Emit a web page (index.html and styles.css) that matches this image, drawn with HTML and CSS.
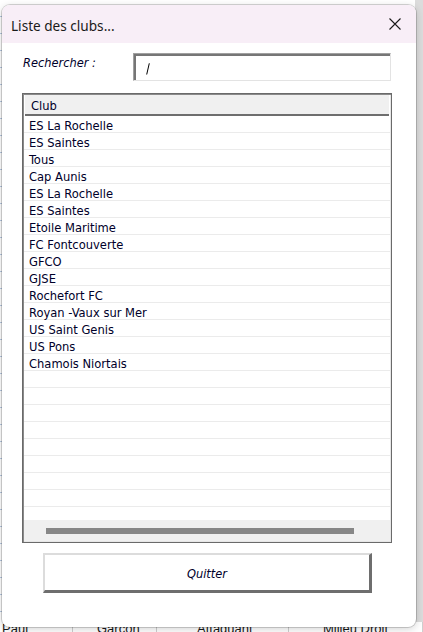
FILE: index.html
```html
<!DOCTYPE html>
<html lang="fr">
<head>
<meta charset="utf-8">
<title>Liste des clubs</title>
<link rel="stylesheet" href="styles.css">
</head>
<body>
<div class="desktop">
  <div class="sheet">
    <div class="sheet-spacer"></div>
    <div class="sheet-row">
      <span class="cell c1">Paul</span>
      <span class="cell c2">Garçon</span>
      <span class="cell c3">Attaquant</span>
      <span class="cell c4">Milieu Droit</span>
    </div>
  </div>

  <div class="dialog">
    <div class="titlebar">
      <span class="title">Liste des clubs...</span>
      <svg class="close" width="12" height="12" viewBox="0 0 12 12"><path d="M0.5 0.5 L11.5 11.5 M11.5 0.5 L0.5 11.5" stroke="#1a1a1a" stroke-width="1.1" fill="none"/></svg>
    </div>
    <div class="content">
      <div class="search-row">
        <label class="search-label">Rechercher :</label>
        <div class="textbox">
          <svg class="caret" width="4" height="12" viewBox="0 0 4 12"><path d="M3.3 0.3 L0.7 11.5" stroke="#000" stroke-width="1" fill="none"/></svg>
        </div>
      </div>

      <div class="listbox">
        <div class="list-header">Club</div>
        <div class="list-rows">
          <div class="row">ES La Rochelle</div>
          <div class="row">ES Saintes</div>
          <div class="row">Tous</div>
          <div class="row">Cap Aunis</div>
          <div class="row">ES La Rochelle</div>
          <div class="row">ES Saintes</div>
          <div class="row">Etoile Maritime</div>
          <div class="row">FC Fontcouverte</div>
          <div class="row">GFCO</div>
          <div class="row">GJSE</div>
          <div class="row">Rochefort FC</div>
          <div class="row">Royan -Vaux sur Mer</div>
          <div class="row">US Saint Genis</div>
          <div class="row">US Pons</div>
          <div class="row">Chamois Niortais</div>
          <div class="row"></div>
          <div class="row"></div>
          <div class="row"></div>
          <div class="row"></div>
          <div class="row"></div>
          <div class="row"></div>
          <div class="row"></div>
          <div class="row"></div>
          <div class="row"></div>
        </div>
        <div class="hscroll"><div class="thumb"></div></div>
      </div>

      <div class="button-row">
        <div class="button">Quitter</div>
      </div>
    </div>
  </div>
</div>
</body>
</html>
```

FILE: styles.css
```css
html, body {
  margin: 0;
  padding: 0;
}
body {
  width: 423px;
  height: 632px;
  overflow: hidden;
  font-family: "DejaVu Sans Condensed", "DejaVu Sans", sans-serif;
}
.desktop {
  position: relative;
  width: 423px;
  height: 632px;
  overflow: hidden;
  background-color: #f3f3f3;
}
.sheet {
  display: flex;
  flex-direction: column;
  width: 423px;
  height: 632px;
  background-color: #ffffff;
  background-image:
    linear-gradient(to right, transparent 415px, #dcdcdc 415px, #dcdcdc 423px),
    repeating-linear-gradient(to bottom, transparent 0, transparent 16px, #b7c9e2 16px, #b7c9e2 17px);
}
.sheet-spacer {
  flex: 1;
}
.sheet-row {
  display: flex;
  height: 10px;
  font-family: "Liberation Sans", sans-serif;
  font-size: 13px;
  line-height: 14px;
  color: #1a1a1a;
  background: #ffffff;
  overflow: hidden;
}
.cell {
  display: block;
  height: 14px;
  border-right: 1px solid #cfcfcf;
  padding-top: 0;
}
.c1 { width: 70px; padding-left: 2px; }
.c2 { padding-left: 24px; box-sizing: border-box; width: 84px; }
.c3 { width: 132px; padding-left: 40px; box-sizing: border-box; }
.c4 { flex: 1; padding-left: 34px; }

.dialog {
  position: absolute;
  left: 2px;
  top: 5px;
  width: 414px;
  height: 622px;
  background: #ffffff;
  border-radius: 8px;
  box-shadow: 0 0 0 1px rgba(0,0,0,0.16), 0 2px 8px rgba(0,0,0,0.18);
  overflow: hidden;
  display: flex;
  flex-direction: column;
}
.titlebar {
  height: 38px;
  flex: none;
  background: #f8eef7;
  display: flex;
  align-items: center;
  justify-content: space-between;
  padding: 0 15px 0 9px;
}
.title {
  font-family: "Noto Sans", "Open Sans", sans-serif;
  font-size: 13.6px;
  color: #1a1a1a;
  position: relative;
  top: 1px;
}
.close {
  display: block;
}
.content {
  display: flex;
  flex-direction: column;
  padding: 10px 0 0 20px;
}
.search-row {
  display: flex;
  align-items: flex-start;
  height: 28px;
}
.search-label {
  width: 110px;
  padding-left: 1px;
  padding-top: 2px;
  font-style: italic;
  font-size: 12.7px;
  color: #00002a;
}
.textbox {
  box-sizing: border-box;
  width: 258px;
  height: 28px;
  border-top: 1px solid #a0a0a0;
  border-left: 1px solid #a0a0a0;
  border-right: 1px solid #e3e3e3;
  border-bottom: 1px solid #e3e3e3;
  box-shadow: inset 2px 2px 0 #767676;
  display: flex;
  align-items: flex-start;
  padding: 9px 0 0 12px;
}
.caret {
  display: block;
}

.listbox {
  box-sizing: border-box;
  margin-top: 12px;
  width: 370px;
  height: 450px;
  border: 1px solid #6a6a6a;
  box-shadow: inset 1px 1px 0 #8a8a8a, inset -1px -1px 0 #e6e6e6;
  padding: 1px;
  display: flex;
  flex-direction: column;
}
.list-header {
  flex: none;
  box-sizing: border-box;
  height: 21px;
  background: #f0f0f0;
  border-bottom: 2px solid #6e6e6e;
  margin: 0 1px 0 1px;
  padding-left: 6px;
  padding-top: 3px;
  font-size: 12.8px;
  line-height: 16px;
  color: #00002a;
}
.list-rows {
  flex: 1;
  overflow: hidden;
  background: #ffffff;
}
.row {
  box-sizing: border-box;
  height: 17px;
  border-bottom: 1px solid #ebebeb;
  padding-left: 5px;
  padding-top: 2px;
  font-size: 12.8px;
  line-height: 15px;
  color: #00002a;
  white-space: nowrap;
}
.hscroll {
  flex: none;
  height: 21px;
  background: #f0f0f0;
  display: flex;
  align-items: center;
  padding-left: 22px;
  margin-bottom: 0;
}
.thumb {
  width: 308px;
  height: 6px;
  background: #878787;
}

.button-row {
  display: flex;
  padding-left: 21px;
  margin-top: 10px;
}
.button {
  box-sizing: border-box;
  width: 329px;
  height: 40px;
  border-top: 2px solid #dcdcdc;
  border-left: 2px solid #dcdcdc;
  border-right: 3px solid #6e6e6e;
  border-bottom: 3px solid #6e6e6e;
  background: #ffffff;
  display: flex;
  align-items: center;
  justify-content: center;
  padding-top: 1px;
  font-style: italic;
  font-size: 12.7px;
  color: #00002a;
}
```
